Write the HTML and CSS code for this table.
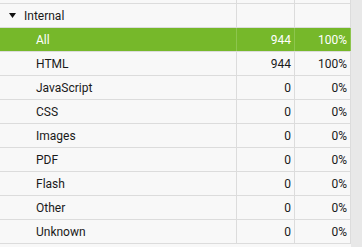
FILE: index.html
```html
<!DOCTYPE html>
<html>
<head>
<meta charset="utf-8">
<link rel="stylesheet" href="styles.css">
</head>
<body>
<div class="page">
  <div class="table">
    <div class="row top"><div class="c1"></div><div class="c2"></div><div class="c3"></div></div>
    <div class="row group"><div class="c1"><svg class="arrow" width="7" height="5" viewBox="0 0 7 5"><polygon points="0,0 7,0 3.5,5" fill="#111"/></svg>Internal</div><div class="c2"></div><div class="c3"></div></div>
    <div class="row sel"><div class="c1 name">All</div><div class="c2 num">944</div><div class="c3 num">100%</div></div>
    <div class="row"><div class="c1 name">HTML</div><div class="c2 num">944</div><div class="c3 num">100%</div></div>
    <div class="row"><div class="c1 name">JavaScript</div><div class="c2 num">0</div><div class="c3 num">0%</div></div>
    <div class="row"><div class="c1 name">CSS</div><div class="c2 num">0</div><div class="c3 num">0%</div></div>
    <div class="row"><div class="c1 name">Images</div><div class="c2 num">0</div><div class="c3 num">0%</div></div>
    <div class="row"><div class="c1 name">PDF</div><div class="c2 num">0</div><div class="c3 num">0%</div></div>
    <div class="row"><div class="c1 name">Flash</div><div class="c2 num">0</div><div class="c3 num">0%</div></div>
    <div class="row"><div class="c1 name">Other</div><div class="c2 num">0</div><div class="c3 num">0%</div></div>
    <div class="row last"><div class="c1 name">Unknown</div><div class="c2 num">0</div><div class="c3 num">0%</div></div>
  </div>
  <div class="strip"></div>
</div>
</body>
</html>
```
FILE: styles.css
```css
html, body {
  margin: 0;
  padding: 0;
  background: #f8f8f8;
}
.page {
  display: flex;
  width: 362px;
  height: 247px;
  overflow: hidden;
  font-family: Roboto, "Liberation Sans", sans-serif;
  font-size: 12px;
  color: #1a1a1a;
}
.table {
  width: 351px;
  display: flex;
  flex-direction: column;
}
.strip {
  flex: 1;
  background: #e8e8e8;
}
.row {
  display: grid;
  grid-template-columns: 237px 58px 56px;
  height: 24px;
  border-top: 1px solid #dcdcdc;
  box-sizing: border-box;
}
.row.top {
  height: 3px;
  border-top: none;
}
.row.last {
  height: 25px;
  border-bottom: 1px solid #dcdcdc;
}
.row > div {
  border-right: 1px solid #dcdcdc;
  display: flex;
  align-items: center;
  white-space: nowrap;
}
.name {
  padding-left: 36px;
}
.num {
  justify-content: flex-end;
  padding-right: 3px;
}
.group .c1 {
  padding-left: 9px;
}
.arrow {
  margin-right: 8px;
  flex: none;
}
.sel {
  background: #76b82a;
  color: #ffffff;
}
.sel > div {
  border-right-color: #8dc54e;
}
```
